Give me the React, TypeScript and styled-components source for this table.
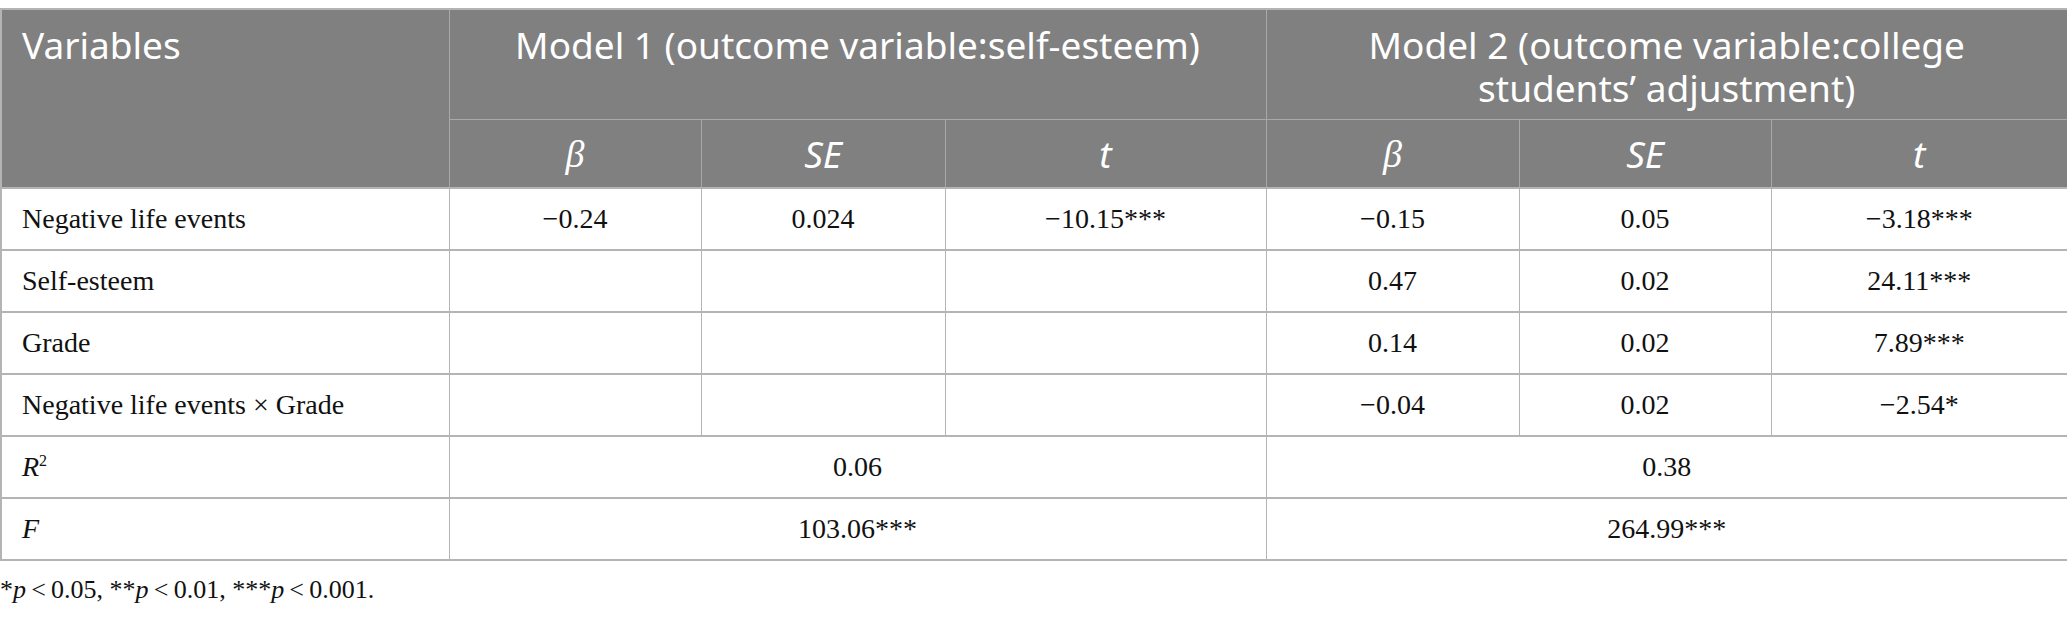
import React from "react";
import styled, { createGlobalStyle } from "styled-components";

const Global = createGlobalStyle`
  html, body { margin: 0; padding: 0; background: #ffffff; }
  body { width: 2067px; }
`;

const Page = styled.div`
  padding-top: 8px;
  width: 2067px;
`;

const Table = styled.table`
  width: 2067px;
  border-collapse: collapse;
  table-layout: fixed;
  border: 2px solid #b4b4b4;
`;

const HeadCell = styled.th<{ $sub?: boolean; $align?: string }>`
  background: #7f807f;
  color: #ffffff;
  font-family: "Noto Sans", "Open Sans", sans-serif;
  font-weight: 400;
  font-size: 37px;
  line-height: 43px;
  border: 1px solid #a9a9a9;
  text-align: ${(p) => p.$align || "center"};
  vertical-align: ${(p) => (p.$sub ? "middle" : "top")};
  padding: ${(p) => (p.$sub ? "0 20px" : p.$align === "left" ? "13px 20px 0 20px" : "13px 40px 0 40px")};
  height: ${(p) => (p.$sub ? "69px" : "110px")};
  box-sizing: border-box;
`;

const Sym = styled.span<{ $serif?: boolean }>`
  font-style: italic;
  font-family: ${(p) => (p.$serif ? '"Liberation Serif", "DejaVu Serif", serif' : 'inherit')};
  font-size: ${(p) => (p.$serif ? "38px" : "inherit")};
`;

const Row = styled.tr`
  height: 62px;
`;

const Cell = styled.td<{ $left?: boolean }>`
  font-family: "Liberation Serif", "Times New Roman", serif;
  font-size: 28px;
  color: #111111;
  border: 1px solid #b4b4b4;
  border-top-width: 2px;
  border-bottom-width: 2px;
  text-align: ${(p) => (p.$left ? "left" : "center")};
  padding: 0 20px;
  vertical-align: middle;
`;

const Ital = styled.i`
  font-style: italic;
`;

const Note = styled.p`
  margin: 0;
  padding-top: 14px;
  font-family: "Liberation Serif", "Times New Roman", serif;
  font-size: 26px;
  color: #111111;
`;

type R = { label: React.ReactNode; vals: string[] };

const rows: R[] = [
  { label: "Negative life events", vals: ["\u22120.24", "0.024", "\u221210.15***", "\u22120.15", "0.05", "\u22123.18***"] },
  { label: "Self-esteem", vals: ["", "", "", "0.47", "0.02", "24.11***"] },
  { label: "Grade", vals: ["", "", "", "0.14", "0.02", "7.89***"] },
  { label: "Negative life events \u00d7 Grade", vals: ["", "", "", "\u22120.04", "0.02", "\u22122.54*"] },
];

export default function App() {
  return (
    <Page>
      <Global />
      <Table>
        <colgroup>
          <col style={{ width: 448 }} />
          <col style={{ width: 252 }} />
          <col style={{ width: 244 }} />
          <col style={{ width: 321 }} />
          <col style={{ width: 253 }} />
          <col style={{ width: 252 }} />
          <col style={{ width: 297 }} />
        </colgroup>
        <thead>
          <tr>
            <HeadCell rowSpan={2} $align="left">Variables</HeadCell>
            <HeadCell colSpan={3}>Model 1 (outcome variable:self-esteem)</HeadCell>
            <HeadCell colSpan={3}>Model 2 (outcome variable:college students’ adjustment)</HeadCell>
          </tr>
          <tr>
            <HeadCell $sub><Sym $serif>β</Sym></HeadCell>
            <HeadCell $sub><Sym>SE</Sym></HeadCell>
            <HeadCell $sub><Sym>t</Sym></HeadCell>
            <HeadCell $sub><Sym $serif>β</Sym></HeadCell>
            <HeadCell $sub><Sym>SE</Sym></HeadCell>
            <HeadCell $sub><Sym>t</Sym></HeadCell>
          </tr>
        </thead>
        <tbody>
          {rows.map((r, i) => (
            <Row key={i}>
              <Cell $left>{r.label}</Cell>
              {r.vals.map((v, j) => (
                <Cell key={j}>{v}</Cell>
              ))}
            </Row>
          ))}
          <Row>
            <Cell $left><Ital>R</Ital><sup style={{ fontSize: "16px" }}>2</sup></Cell>
            <Cell colSpan={3}>0.06</Cell>
            <Cell colSpan={3}>0.38</Cell>
          </Row>
          <Row>
            <Cell $left><Ital>F</Ital></Cell>
            <Cell colSpan={3}>103.06***</Cell>
            <Cell colSpan={3}>264.99***</Cell>
          </Row>
        </tbody>
      </Table>
      <Note>
        *<Ital>p</Ital>{"\u2009<\u2009"}0.05, **<Ital>p</Ital>{"\u2009<\u2009"}0.01, ***<Ital>p</Ital>{"\u2009<\u2009"}0.001.
      </Note>
    </Page>
  );
}
